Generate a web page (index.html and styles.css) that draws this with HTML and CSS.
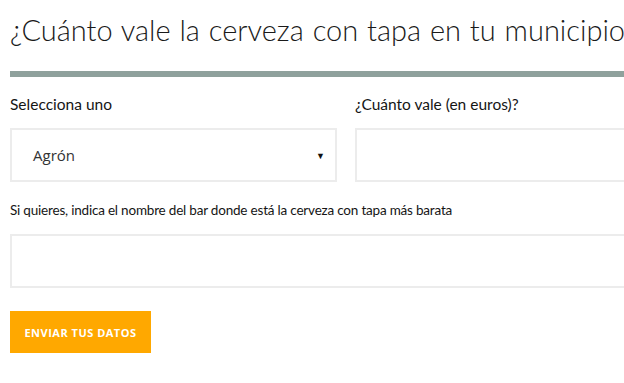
FILE: index.html
```html
<!DOCTYPE html>
<html lang="es">
<head>
    <meta charset="UTF-8">
    <meta name="viewport" content="width=device-width, initial-scale=1.0">
    <title>¿Cuánto vale la cerveza con tapa?</title>
    <link rel="stylesheet" href="styles.css">
</head>
<body>
    <div class="page">
        <h1>¿Cuánto vale la cerveza con tapa en tu municipio?</h1>
        <div class="rule"></div>

        <form class="beer-form">
            <!-- Municipio y precio -->
            <div class="row">
                <div class="field">
                    <label for="municipio" class="label-lg">Selecciona uno</label>
                    <div class="select-box" id="municipio">
                        <span class="select-value">Agrón</span>
                        <span class="select-arrow">▼</span>
                    </div>
                </div>
                <div class="field">
                    <label for="precio" class="label-lg">¿Cuánto vale (en euros)?</label>
                    <input type="text" id="precio" class="text-input">
                </div>
            </div>

            <!-- Nombre del bar -->
            <div class="field">
                <label for="bar">Si quieres, indica el nombre del bar donde está la cerveza con tapa más barata</label>
                <input type="text" id="bar" class="text-input">
            </div>

            <button type="button" class="submit-btn">ENVIAR TUS DATOS</button>
        </form>
    </div>
</body>
</html>
```

FILE: styles.css
```css
html, body {
    overflow: hidden;
}
body {
    margin: 0;
    background-color: #ffffff;
    color: #222;
    font-family: Lato, "Liberation Sans", sans-serif;
}
.page {
    width: 672px;
    padding: 12px 0 0 10px;
}
h1 {
    margin: 0;
    font-size: 29px;
    font-weight: 300;
    line-height: 36px;
    word-spacing: 1px;
    color: #1a1a1a;
    white-space: nowrap;
}
.rule {
    height: 6px;
    margin-top: 23px;
    background-color: #8fa19c;
}
.beer-form {
    display: flex;
    flex-direction: column;
    padding-top: 18px;
}
.row {
    display: grid;
    grid-template-columns: 327px 327px;
    gap: 18px;
}
.field {
    display: flex;
    flex-direction: column;
    margin-bottom: 19px;
}
label {
    display: block;
    font-size: 13.5px;
    line-height: 18px;
    color: #151515;
    margin-bottom: 15px;
    letter-spacing: -0.2px;
    white-space: nowrap;
}
.label-lg {
    font-size: 15.5px;
    letter-spacing: 0;
}
.select-box,
.text-input {
    box-sizing: border-box;
    height: 54px;
    border: 2px solid #ececec;
    background-color: #fff;
}
.text-input {
    width: 100%;
    margin: 0;
    font-size: 15px;
}
.select-box {
    display: flex;
    align-items: center;
    justify-content: space-between;
    padding: 0 10px 0 21px;
}
.select-value {
    font-family: "Open Sans", "Liberation Sans", sans-serif;
    font-size: 15px;
    color: #333;
}
.select-arrow {
    font-size: 9px;
    color: #111;
}
.submit-btn {
    align-self: flex-start;
    width: 141px;
    height: 42px;
    margin-top: 4px;
    border: none;
    background-color: #ffa800;
    color: #fff;
    font-family: "Open Sans", "Liberation Sans", sans-serif;
    font-size: 11px;
    font-weight: 700;
    letter-spacing: 0.5px;
    cursor: pointer;
}
```
